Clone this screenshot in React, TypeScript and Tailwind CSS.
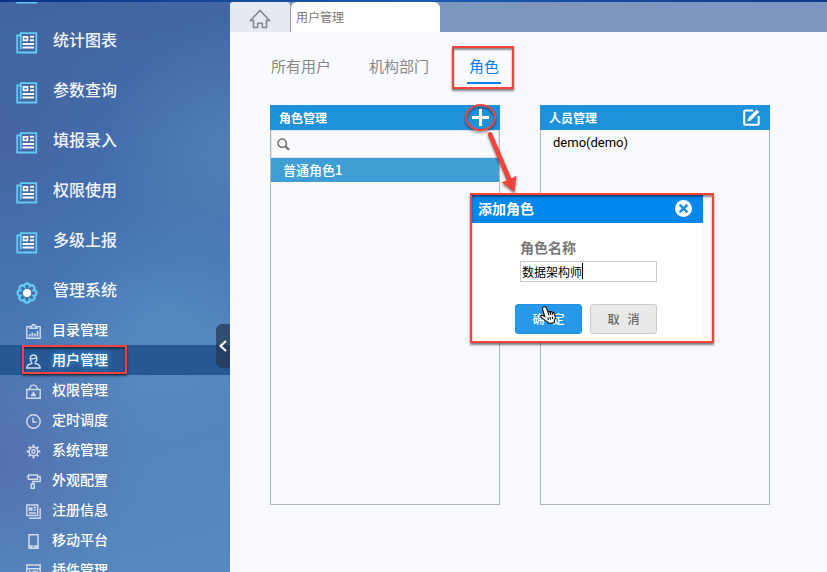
import React, { useState } from "react";

const menus = ["统计图表", "参数查询", "填报录入", "权限使用", "多级上报"];

function ReportIcon() {
  return (
    <svg width="22" height="22" viewBox="0 0 22 22" fill="none" className="shrink-0">
      <path d="M4.700 1.200H20.300V20.500H1.200V3.500H4.700V1.200Z" stroke="#62cbf5" strokeWidth="1.800" />
      <path d="M4.700 3V17.500" stroke="#62cbf5" strokeWidth="1.800" />
      <path d="M7.500 4.900H11.500V8.300H7.500Z" stroke="#fff" strokeWidth="1.700" />
      <path d="M14 4.800H18M14 8.200H18M6.500 12H18M6.500 15.500H18" stroke="#fff" strokeWidth="2" />
    </svg>
  );
}

function SystemIcon() {
  return (
    <svg width="22" height="22" viewBox="0 0 22 22" fill="none" className="shrink-0">
      <path
        d="M8.210 4.260A2.790 2.790 0 0 1 13.790 4.260A2.790 2.790 0 0 1 17.740 8.210A2.790 2.790 0 0 1 17.740 13.790A2.790 2.790 0 0 1 13.790 17.740A2.790 2.790 0 0 1 8.210 17.740A2.790 2.790 0 0 1 4.260 13.790A2.790 2.790 0 0 1 4.260 8.210A2.790 2.790 0 0 1 8.210 4.260Z"
        stroke="#62cbf5"
        strokeWidth="2.200"
      />
      <circle cx="11" cy="11" r="4" fill="#fff" />
    </svg>
  );
}

function SubIcon({ children }: { children: React.ReactNode }) {
  return (
    <svg
      width="15"
      height="15"
      viewBox="0 0 15 15"
      fill="none"
      stroke="#cfdcf0"
      strokeWidth="1.400"
      className="mt-1 shrink-0"
    >
      {children}
    </svg>
  );
}

const subMenus = [
  {
    name: "目录管理",
    icon: (
      <>
        <path d="M4 2.600H.8V14.200H14.200V2.600H11" />
        <path d="M4 4.300V2.500H5.700L6.500.8H8.500L9.300 2.500H11V4.300Z" />
        <path d="M3.700 12.500V10M6.300 12.500V8.500M8.900 12.500V9.500M11.500 12.500V7" strokeWidth="1.700" />
      </>
    ),
  },
  {
    name: "用户管理",
    icon: (
      <>
        <path d="M5.800 8.300C3.500 6.500 3.300 1 7.500 1S11.500 6.500 9.200 8.300" />
        <path d="M5.800 8.300V9.500C3 10 1 11.300.8 14H14.200C14 11.300 12 10 9.200 9.500V8.300" />
        <path d="M4.200 4.300C6 5 8.500 4.800 10.800 3.500" />
      </>
    ),
  },
  {
    name: "权限管理",
    icon: (
      <>
        <path d="M.8 5.500H14.200V14.200H.8Z" />
        <path d="M3.500 5.500C4 -.3 11 -.3 11.500 5.500" />
        <path d="M7.500 7.200L9 9.500L8.300 10.300H10V12.300H5V10.300H6.700L6 9.500Z" fill="#cfdcf0" stroke="none" />
      </>
    ),
  },
  {
    name: "定时调度",
    icon: (
      <>
        <circle cx="7.500" cy="7.500" r="6.700" />
        <path d="M7 3.500V8H10.500" />
      </>
    ),
  },
  {
    name: "系统管理",
    icon: (
      <>
        <circle cx="7.500" cy="7.500" r="4.300" />
        <circle cx="7.500" cy="7.500" r="1.700" />
        <path
          d="M7.500 3V.6M7.500 12V14.400M3 7.500H.6M12 7.500H14.400M4.300 4.300L2.600 2.600M10.700 10.700L12.400 12.400M4.300 10.700L2.600 12.400M10.700 4.300L12.400 2.600"
          strokeWidth="1.900"
        />
      </>
    ),
  },
  {
    name: "外观配置",
    icon: (
      <>
        <path d="M2.500 1H11.500V5.200H2.500ZM2.500 2.500H.6M11.500 2.500H14.200V7.500H6.800V10" />
        <path d="M5.300 10H8.300V14.300H5.300Z" />
      </>
    ),
  },
  {
    name: "注册信息",
    icon: (
      <>
        <path d="M.8 1H11.700V11.500H.8Z" />
        <path d="M14.200 4V14.200H3" />
        <path d="M3.300 4H5.800V6H3.300Z" />
        <path d="M7.500 3.500H10M7.500 6H10M3 9H10" />
      </>
    ),
  },
  {
    name: "移动平台",
    icon: (
      <>
        <path d="M3 .8H12V14.200H3Z" strokeWidth="1.500" />
        <path d="M3 12.500H12" strokeWidth="2.400" />
        <path d="M6.800 12.500H8.200" stroke="#4a7db9" />
      </>
    ),
  },
  {
    name: "插件管理",
    icon: (
      <>
        <path d="M.8 1H14.200V14H.8ZM.8 4.800H14.200" />
        <path d="M3 7.500H5M6.500 7.500H12M3 10H5M6.500 10H12" />
      </>
    ),
  },
];

// red frame drawn over the highlighted parts
const mark =
  "pointer-events-none absolute border-2 border-[#f5423c] shadow-[0_2px_2px_rgba(0,0,0,0.5),inset_0_2px_2px_rgba(0,0,0,0.45)]";

const menuLink = "flex h-[50px] items-center gap-[15px] pb-0.5 pl-4 text-base font-medium text-[#f1f6fc]";

function Sidebar() {
  return (
    <aside className="relative w-[230px] shrink-0 overflow-hidden bg-[radial-gradient(circle_at_0%_80%,rgba(84,92,158,0.5),transparent_150px),radial-gradient(circle_at_0%_25%,rgba(76,88,150,0.35),transparent_120px),radial-gradient(circle_at_100%_26%,rgba(100,145,190,0.45),transparent_130px),radial-gradient(circle_at_70%_56%,rgba(92,155,205,0.4),transparent_120px),linear-gradient(165deg,#42649f_0%,#426aa8_20%,#4674b3_48%,#5384bc_66%,#5589bf_100%)]">
      <nav>
        <div className="flex h-[13px] items-end overflow-hidden pb-[11px] pl-4">
          <ReportIcon />
        </div>
        <ul>
          {menus.map((name) => (
            <li key={name}>
              <a href="#" className={menuLink}>
                <span className="mt-2">
                  <ReportIcon />
                </span>
                {name}
              </a>
            </li>
          ))}
          <li>
            <a href="#" className={menuLink}>
              <span className="mt-2">
                <SystemIcon />
              </span>
              管理系统
            </a>
            <ul>
              {subMenus.map((item) => {
                const active = item.name === "用户管理";
                return (
                  <li key={item.name} className="relative">
                    <a
                      href="#"
                      className={`flex h-[30px] items-center gap-[11px] pb-0.5 pl-[26px] text-sm font-medium text-white ${
                        active ? "bg-[#265894] [text-shadow:0_0_6px_#4fb4ff]" : ""
                      }`}
                    >
                      <SubIcon>{item.icon}</SubIcon>
                      {item.name}
                    </a>
                    {active && <span className={`${mark} top-0 left-[22px] h-[29px] w-[105px]`} />}
                  </li>
                );
              })}
            </ul>
          </li>
        </ul>
      </nav>
      <button
        aria-label="收起"
        className="absolute top-[322px] right-0 flex h-11 w-3.5 items-center justify-center rounded-l-md bg-[#24344f]/70"
      >
        <svg width="8" height="12" viewBox="0 0 8 12" fill="none" stroke="#fff" strokeWidth="2.200">
          <path d="M7 1L1.500 6L7 11" />
        </svg>
      </button>
    </aside>
  );
}

function AddRoleDialog() {
  const [name, setName] = useState("数据架构师");
  return (
    <div role="dialog" aria-label="添加角色" className="absolute top-[193px] left-[242px] w-[231px] bg-white">
      <header className="flex h-7 items-center justify-between bg-[#0087ee] pr-[11px] pb-0.5 pl-1.5 text-sm font-bold text-white">
        添加角色
        <button aria-label="关闭">
          <svg width="17" height="17" viewBox="0 0 17 17">
            <circle cx="8.500" cy="8.500" r="8.500" fill="#fff" />
            <path d="M4.600 4.600L12.400 12.400M12.400 4.600L4.600 12.400" stroke="#1489e0" strokeWidth="2.200" />
          </svg>
        </button>
      </header>
      <form className="pt-3.5 pb-[7px]" onSubmit={(e) => e.preventDefault()}>
        <div className="pr-[46px] pl-12">
          <label htmlFor="roleName" className="block text-sm leading-5 font-bold text-[#777]">
            角色名称
          </label>
          <div className="relative mt-1">
            <input
              id="roleName"
              value={name}
              onChange={(e) => setName(e.target.value)}
              className="block h-[21px] w-full border border-[#ccc] bg-white px-px text-xs text-black outline-none"
            />
            <span className="pointer-events-none absolute top-0.5 left-[62px] h-4 w-px bg-black" />
          </div>
        </div>
        <div className="mt-[22px] flex gap-2 pr-[46px] pl-[43px]">
          <button className="relative h-[30px] flex-1 rounded-[3px] border border-[#1f90dc] bg-[#2899e8] text-xs font-medium text-white">
            确&nbsp;&nbsp; 定
            <svg
              width="16"
              height="18"
              viewBox="0 0 16 18"
              className="pointer-events-none absolute top-px left-6"
            >
              <path
                d="M4.200.8C5.300.4 6 1 6.400 2L7.900 5.700C8.600 5 9.700 5.200 10 6C10.700 5.300 11.800 5.600 12.200 6.400C13.200 6 14 6.500 14.300 7.500L15.200 10.500C15.500 12.300 14.900 13.500 14.300 14.500V16.500L8.500 17.500L7.800 16C6 15.500 4 13.500 1.200 11.300C.1 10.300 1.100 8.700 2.600 9.300L4.800 10.500L2.500 3C2.200 1.900 3.100 1.100 4.200.8Z"
                fill="#fff"
                stroke="#111"
                strokeWidth="1.100"
              />
              <path
                d="M7.900 5.700L9 9.300M10 6L11 9M12.200 6.400L12.900 8.800M7.800 11.300L8.400 14M10 11L10.600 13.700M12.200 10.600L12.700 13.200"
                stroke="#111"
                strokeWidth="1.100"
              />
            </svg>
          </button>
          <button className="h-[30px] flex-1 rounded-[3px] border border-[#ccc] bg-[#e9e9e9] text-xs font-medium text-[#666]">
            取&nbsp;&nbsp; 消
          </button>
        </div>
      </form>
      <span className={`${mark} -top-0.5 -right-[11px] -bottom-0.5 -left-0.5`} />
    </div>
  );
}

export default function App() {
  return (
    <div className="flex h-screen flex-col overflow-hidden font-['Noto_Sans_CJK_SC',sans-serif]">
      <div className="h-0.5 shrink-0 bg-linear-to-r from-[#0a3384] via-[#1a5cb0] to-[#0b3a8c]" />
      <div className="flex min-h-0 flex-1">
        <Sidebar />
        <main className="relative flex min-w-0 flex-1 flex-col bg-[#f9fafd]">
          <div className="flex h-[30px] shrink-0 bg-[#7c96c0]">
            <button
              aria-label="首页"
              className="flex w-[61px] items-center justify-center rounded-t border-r border-[#999] bg-[#e5e9f1] pt-1"
            >
              <svg width="22" height="20" viewBox="0 0 22 20" fill="none" stroke="#888" strokeWidth="1.600">
                <path d="M1.500 11.500L11 1.500L20.500 11.500H17.500V18.500H13.300V14.300H8.700V18.500H4.500V11.500Z" />
              </svg>
            </button>
            <button className="w-[149px] rounded-t-md bg-white pl-[5px] text-left text-xs text-[#777]">
              用户管理
            </button>
          </div>

          <div className="flex h-[73px] shrink-0 items-start gap-[38px] pt-[21px] pl-[41px] text-[15px] leading-[26px] text-[#888]">
            <button>所有用户</button>
            <button>机构部门</button>
            <button className="relative border-b-2 border-[#0a7cf7] px-0.5 pb-[3px] text-[#0a7cf7]">
              角色
              <span className={`${mark} -top-[7px] -right-[13px] -bottom-[7px] -left-[15px]`} />
            </button>
          </div>

          <div className="mb-[67px] flex min-h-0 flex-1 gap-10 pr-[57px] pl-10">
            <section className="flex flex-1 flex-col border border-t-0 border-[#b3b6ba]">
              <header className="-mx-px flex h-[25px] items-center justify-between bg-[#1e91dc] pr-[11px] pl-[9px] text-xs font-bold text-white">
                角色管理
                <button aria-label="添加">
                  <svg width="17" height="17" viewBox="0 0 17 17" stroke="#fff" strokeWidth="3">
                    <path d="M8.500 0V17M0 8.500H17" />
                  </svg>
                </button>
              </header>
              <label className="flex h-7 items-center border border-[#e2e4e7] pl-[5px]">
                <svg width="13" height="13" viewBox="0 0 13 13" fill="none" stroke="#777">
                  <circle cx="5.200" cy="5.200" r="4.200" strokeWidth="1.700" />
                  <path d="M8.200 8.200L12 12" strokeWidth="2.400" />
                </svg>
                <input aria-label="搜索" className="min-w-0 flex-1 px-1 text-xs outline-none" />
              </label>
              <ul>
                <li className="h-6 bg-[#3f9fd4] pl-3 text-[13px] leading-6 font-medium text-white">普通角色1</li>
              </ul>
            </section>
            <section className="flex flex-1 flex-col border border-t-0 border-[#b3b6ba]">
              <header className="-mx-px flex h-[25px] items-center justify-between bg-[#1e91dc] pr-2.5 pl-[9px] text-xs font-bold text-white">
                人员管理
                <button aria-label="编辑">
                  <svg width="17" height="17" viewBox="0 0 17 17" fill="none" stroke="#fff">
                    <path
                      d="M10 1.500H2.200Q1.200 1.500 1.200 2.500V14.800Q1.200 15.800 2.200 15.800H14.700Q15.700 15.800 15.700 14.800V7"
                      strokeWidth="2"
                    />
                    <path d="M7 9.800L15 1.800" strokeWidth="3.400" />
                    <path d="M5.600 8.600L4.300 12.500L8.400 11.200Z" fill="#fff" stroke="none" />
                  </svg>
                </button>
              </header>
              <ul>
                <li className="pl-3 font-[Roboto,sans-serif] text-[13px] leading-[26px] text-black">demo(demo)</li>
              </ul>
            </section>
          </div>

          <svg
            width="56"
            height="96"
            viewBox="462 100 56 96"
            className="pointer-events-none absolute top-[98px] left-[232px] drop-shadow-[0_2px_1px_rgba(0,0,0,0.45)]"
          >
            <ellipse cx="480.500" cy="117.500" rx="14.500" ry="12.500" fill="none" stroke="#f5423c" strokeWidth="2" />
            <path
              d="M487.500 134Q489.500 130.500 492 133L511.500 178.500L516.500 175.500L514.500 192L501.500 182L507 180.500Z"
              fill="#f5423c"
            />
          </svg>

          <AddRoleDialog />
        </main>
      </div>
    </div>
  );
}
